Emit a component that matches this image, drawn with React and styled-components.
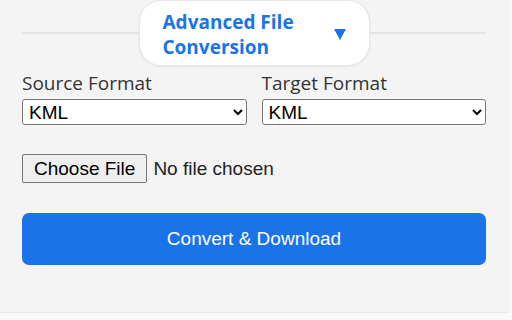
import React from 'react'
import styled, { createGlobalStyle } from 'styled-components'

const GlobalStyle = createGlobalStyle`
  body {
    margin: 0;
    background: #f8f9fa;
    font-family: 'Open Sans', 'Liberation Sans', sans-serif;
  }
`

const Panel = styled.div`
  width: 509px;
  box-sizing: border-box;
  background: #f4f4f4;
  border-bottom: 1px solid #ebebeb;
  padding: 0 23px 47px 22px;
`

const SectionHead = styled.div`
  display: flex;
  align-items: center;
  height: 66px;

  &::before,
  &::after {
    content: '';
    flex: 1;
    height: 2px;
    background: #e4e4e4;
  }
`

const Pill = styled.button`
  width: 231px;
  height: 66px;
  box-sizing: border-box;
  display: flex;
  align-items: center;
  justify-content: space-between;
  padding: 0 23px;
  background: #fff;
  border: 1px solid #e6e6e6;
  border-radius: 22px;
  box-shadow: 0 1px 3px rgba(0, 0, 0, 0.06);
  cursor: pointer;
`

const PillTitle = styled.span`
  max-width: 150px;
  padding-top: 3px;
  text-align: left;
  font-family: 'Open Sans', sans-serif;
  font-size: 19px;
  font-weight: 700;
  line-height: 25px;
  color: #1a73e8;
`

const Arrow = styled.svg`
  width: 12px;
  height: 11px;
  margin-top: 2px;
`

const FormatGrid = styled.div`
  display: grid;
  grid-template-columns: 1fr 1fr;
  column-gap: 15px;
  margin-top: 5px;
`

const Field = styled.label`
  display: flex;
  flex-direction: column;
  gap: 3px;
`

const FieldLabel = styled.span`
  font-size: 19px;
  line-height: 25px;
  color: #333;
`

const Select = styled.select`
  height: 26px;
  font-family: 'Liberation Sans', Arial, sans-serif;
  font-size: 19px;
  color: #000;
  background: #fff;
  border: 1px solid #767676;
  border-radius: 3px;
  padding: 0 2px;
`

const FileInput = styled.input`
  display: block;
  margin-top: 29px;
  font-family: 'Liberation Sans', Arial, sans-serif;
  font-size: 19px;
  color: #222;

  &::file-selector-button {
    font-family: inherit;
    font-size: 19px;
    height: 29px;
    padding: 0 11px;
    margin-right: 6px;
    background: #efefef;
    border: 1px solid #767676;
    border-radius: 2px;
    color: #000;
  }
`

const ConvertButton = styled.button`
  display: block;
  width: 100%;
  height: 52px;
  margin-top: 30px;
  background: #1a73e8;
  color: #fff;
  border: none;
  border-radius: 7px;
  font-family: 'Liberation Sans', Arial, sans-serif;
  font-size: 19px;
  cursor: pointer;
`

const formats = ['KML', 'GeoJSON', 'GPX', 'CSV', 'Shapefile']

function FormatSelect({ label }) {
  return (
    <Field>
      <FieldLabel>{label}</FieldLabel>
      <Select defaultValue="KML">
        {formats.map((f) => (
          <option key={f}>{f}</option>
        ))}
      </Select>
    </Field>
  )
}

export default function App() {
  return (
    <>
      <GlobalStyle />
      <Panel>
        <SectionHead>
          <Pill>
            <PillTitle>Advanced File Conversion</PillTitle>
            <Arrow viewBox="0 0 12 11">
              <polygon points="0,0 12,0 6,11" fill="#1a73e8" />
            </Arrow>
          </Pill>
        </SectionHead>
        <FormatGrid>
          <FormatSelect label="Source Format" />
          <FormatSelect label="Target Format" />
        </FormatGrid>
        <FileInput type="file" />
        <ConvertButton>Convert &amp; Download</ConvertButton>
      </Panel>
    </>
  )
}
